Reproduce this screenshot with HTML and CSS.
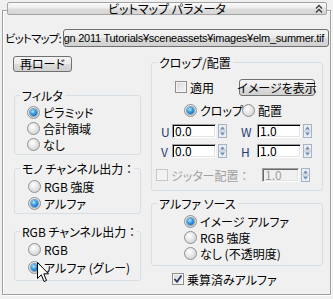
FILE: index.html
```html
<!DOCTYPE html>
<html lang="ja">
<head>
    <meta charset="UTF-8">
    <title>ビットマップ パラメータ</title>
    <link rel="stylesheet" href="styles.css">
</head>
<body>
    <div class="rollout">
        <div class="rollout-title">
            <span>ビットマップ パラメータ</span>
            <svg class="chevron" width="8" height="9" viewBox="0 0 8 9">
                <polyline points="1,4.5 4,1.5 7,4.5" fill="none" stroke="#3c3c3c" stroke-width="1.4"/>
                <polyline points="1,8.5 4,5.5 7,8.5" fill="none" stroke="#3c3c3c" stroke-width="1.4"/>
            </svg>
        </div>

        <div class="bitmap-row">
            <span class="bitmap-label">ビットマップ:</span>
            <div class="btn path-btn"><span>gn 2011 Tutorials¥sceneassets¥images¥elm_summer.tif</span></div>
        </div>

        <div class="columns">
            <!-- 左側 -->
            <div class="col-left">
                <div class="btn reload">再ロード</div>

                <fieldset class="group filter">
                    <legend>フィルタ</legend>
                    <div class="group-body">
                        <div class="opt"><span class="radio on"></span>ピラミッド</div>
                        <div class="opt"><span class="radio"></span>合計領域</div>
                        <div class="opt"><span class="radio"></span>なし</div>
                    </div>
                </fieldset>

                <fieldset class="group mono">
                    <legend>モノ チャンネル出力 ：</legend>
                    <div class="group-body">
                        <div class="opt"><span class="radio"></span>RGB 強度</div>
                        <div class="opt"><span class="radio on"></span>アルファ</div>
                    </div>
                </fieldset>

                <fieldset class="group rgb">
                    <legend>RGB チャンネル出力 ：</legend>
                    <div class="group-body">
                        <div class="opt"><span class="radio"></span>RGB</div>
                        <div class="opt"><span class="radio on"></span>アルファ (グレー)</div>
                    </div>
                </fieldset>
            </div>

            <!-- 右側 -->
            <div class="col-right">
                <fieldset class="group crop">
                    <legend>クロップ/配置</legend>
                    <div class="group-body">
                        <div class="apply-row">
                            <div class="opt"><span class="check"></span>適用</div>
                            <div class="btn show-btn">イメージを表示</div>
                        </div>
                        <div class="mode-row">
                            <div class="opt"><span class="radio on"></span>クロップ</div>
                            <div class="opt"><span class="radio"></span>配置</div>
                        </div>
                        <div class="num-row">
                            <span class="axis">U</span>
                            <span class="field">0.0</span>
                            <svg class="spin" width="9" height="14" viewBox="0 0 9 14"><rect x="0.5" y="0.5" width="8" height="13" fill="#e9eef4" stroke="#a9b4c2"/><line x1="1" y1="7" x2="8" y2="7" stroke="#b8c2ce"/><path d="M4.5 2.5 L7 5.5 L2 5.5 Z" fill="#6d8bb3"/><path d="M2 8.5 L7 8.5 L4.5 11.5 Z" fill="#6d8bb3"/></svg>
                            <span class="axis wide">W</span>
                            <span class="field">1.0</span>
                            <svg class="spin" width="9" height="14" viewBox="0 0 9 14"><rect x="0.5" y="0.5" width="8" height="13" fill="#e9eef4" stroke="#a9b4c2"/><line x1="1" y1="7" x2="8" y2="7" stroke="#b8c2ce"/><path d="M4.5 2.5 L7 5.5 L2 5.5 Z" fill="#6d8bb3"/><path d="M2 8.5 L7 8.5 L4.5 11.5 Z" fill="#6d8bb3"/></svg>
                        </div>
                        <div class="num-row">
                            <span class="axis">V</span>
                            <span class="field">0.0</span>
                            <svg class="spin" width="9" height="14" viewBox="0 0 9 14"><rect x="0.5" y="0.5" width="8" height="13" fill="#e9eef4" stroke="#a9b4c2"/><line x1="1" y1="7" x2="8" y2="7" stroke="#b8c2ce"/><path d="M4.5 2.5 L7 5.5 L2 5.5 Z" fill="#6d8bb3"/><path d="M2 8.5 L7 8.5 L4.5 11.5 Z" fill="#6d8bb3"/></svg>
                            <span class="axis wide">H</span>
                            <span class="field">1.0</span>
                            <svg class="spin" width="9" height="14" viewBox="0 0 9 14"><rect x="0.5" y="0.5" width="8" height="13" fill="#e9eef4" stroke="#a9b4c2"/><line x1="1" y1="7" x2="8" y2="7" stroke="#b8c2ce"/><path d="M4.5 2.5 L7 5.5 L2 5.5 Z" fill="#6d8bb3"/><path d="M2 8.5 L7 8.5 L4.5 11.5 Z" fill="#6d8bb3"/></svg>
                        </div>
                        <div class="jitter-row">
                            <div class="opt disabled"><span class="check off"></span>ジッター配置 ：</div>
                            <span class="field disabled">1.0</span>
                            <svg class="spin" width="9" height="14" viewBox="0 0 9 14"><rect x="0.5" y="0.5" width="8" height="13" fill="#e9eef4" stroke="#a9b4c2"/><line x1="1" y1="7" x2="8" y2="7" stroke="#b8c2ce"/><path d="M4.5 2.5 L7 5.5 L2 5.5 Z" fill="#6d8bb3"/><path d="M2 8.5 L7 8.5 L4.5 11.5 Z" fill="#6d8bb3"/></svg>
                        </div>
                    </div>
                </fieldset>

                <fieldset class="group alpha">
                    <legend>アルファ ソース</legend>
                    <div class="group-body">
                        <div class="opt"><span class="radio on"></span>イメージ アルファ</div>
                        <div class="opt"><span class="radio"></span>RGB 強度</div>
                        <div class="opt"><span class="radio"></span>なし (不透明度)</div>
                    </div>
                </fieldset>

                <div class="opt premult"><span class="check on"><svg width="10" height="10" viewBox="0 0 10 10"><path d="M1.5 5 L4 7.8 L8.5 1.5" fill="none" stroke="#2b3b66" stroke-width="1.8"/></svg></span>乗算済みアルファ</div>
            </div>
        </div>
    </div>

    <!-- マウスカーソル -->
    <svg class="cursor" width="13" height="21" viewBox="0 0 13 21">
        <path d="M0.5 0.5 L0.5 16.5 L4.3 12.8 L7 19.5 L9.5 18.5 L6.8 11.8 L11.5 11.8 Z" fill="#fff" stroke="#000" stroke-width="1" stroke-linejoin="miter"/>
    </svg>
</body>
</html>
```

FILE: styles.css
```css
body {
    margin: 0;
    width: 333px;
    height: 299px;
    overflow: hidden;
    position: relative;
    background-color: #f0f0f0;
    font-family: "Noto Sans CJK JP", sans-serif;
    font-size: 12px;
    font-feature-settings: "palt";
    color: #000;
}
.rollout {
    margin: 10px 2px 0 2px;
    height: 285px;
    border: 1px solid #a0a0a0;
    box-shadow: inset 1px 1px 0 #fff, 1px 1px 0 #fff;
    box-sizing: border-box;
}
.rollout-title {
    margin: -9px 3px 0 4px;
    height: 13px;
    border: 1px solid #a3a3a3;
    border-radius: 2px;
    background: linear-gradient(#fbfbfb, #eeeeee 45%, #dddddd 55%, #d6d6d6);
    box-sizing: border-box;
    display: flex;
    align-items: center;
    justify-content: center;
    line-height: 11px;
    position: relative;
}
.chevron {
    position: absolute;
    right: 3px;
    top: 1px;
}
.bitmap-row {
    margin-top: 14px;
    padding: 0 1px 0 2px;
    display: flex;
    align-items: center;
    height: 18px;
}
.bitmap-label {
    flex: none;
    white-space: nowrap;
    font-size: 11.5px;
    letter-spacing: -0.8px;
    margin-right: 2px;
}
.btn {
    border: 1px solid #707070;
    border-radius: 3px;
    background: linear-gradient(#f4f4f4, #ebebeb 50%, #dddddd 50%, #d0d0d0);
    box-sizing: border-box;
    display: flex;
    align-items: center;
    justify-content: center;
    white-space: nowrap;
}
.path-btn {
    flex: 1;
    min-width: 0;
    height: 18px;
    overflow: hidden;
    justify-content: flex-end;
    padding-right: 4px;
    line-height: 16px;
    font-family: "Liberation Sans", sans-serif;
    font-size: 11px;
    letter-spacing: -0.25px;
}
.columns {
    display: flex;
}
.col-left {
    width: 148px;
    padding-left: 10px;
    box-sizing: border-box;
}
.col-right {
    width: 172px;
}
.reload {
    margin-top: 9px;
    width: 59px;
    height: 16px;
    line-height: 14px;
}
.group {
    margin: 0;
    padding: 0;
    border: 1px solid #d5dfe5;
    border-radius: 3px;
    min-width: 0;
    box-sizing: border-box;
}
.group legend {
    margin-left: 5px;
    padding: 0 2px;
    line-height: 15px;
    white-space: nowrap;
}
.group-body {
    display: flex;
    flex-direction: column;
}
.opt {
    display: flex;
    align-items: center;
    gap: 3px;
    height: 16px;
    white-space: nowrap;
}
.radio {
    width: 13px;
    height: 13px;
    border-radius: 50%;
    box-sizing: border-box;
    border: 1px solid #8d9092;
    background: radial-gradient(circle at 40% 35%, #ffffff, #e6e6e6 45%, #c9c9c9);
    display: flex;
    align-items: center;
    justify-content: center;
    flex: none;
}
.radio.on::after {
    content: "";
    width: 7px;
    height: 7px;
    border-radius: 50%;
    background: radial-gradient(circle at 40% 35%, #b5e8ff, #3098e0 45%, #0d4c90);
    box-shadow: 0 0 0 1px #7b9cba;
}
.check {
    width: 12px;
    height: 12px;
    box-sizing: border-box;
    border: 1px solid #8f8f8f;
    background: linear-gradient(135deg, #d6d6d6, #f7f7f7);
    box-shadow: inset 0 0 0 1px #f4f4f4;
    display: flex;
    align-items: center;
    justify-content: center;
    flex: none;
}
.check.off {
    border-color: #c6c6c6;
    background: #f2f2f2;
}
.disabled {
    color: #a0a0a0;
}
.filter {
    width: 127px;
    margin: 16px 0 0 1px;
}
.filter .group-body {
    padding: 1px 0 2px 12px;
}
.mono {
    width: 127px;
    margin: 6px 0 0 1px;
}
.mono .group-body {
    padding: 2px 0 2px 13px;
    gap: 1px;
}
.rgb {
    width: 127px;
    margin: 10px 0 0 1px;
}
.rgb .group-body {
    padding: 2px 0 5px 13px;
    gap: 2px;
}
.crop {
    margin-top: 8px;
}
.crop .group-body {
    padding: 8px 0 8px 0;
}
.apply-row {
    display: flex;
    align-items: center;
    height: 18px;
    padding-left: 23px;
}
.apply-row .opt {
    width: 64px;
}
.show-btn {
    width: 76px;
    height: 17px;
    line-height: 15px;
}
.mode-row {
    display: flex;
    margin-top: 6px;
    padding-left: 32px;
}
.mode-row .opt {
    width: 58px;
}
.num-row {
    display: flex;
    align-items: center;
    margin-top: 6px;
    padding-left: 9px;
    height: 14px;
}
.axis {
    width: 11px;
    color: #1d3c78;
}
.axis.wide {
    width: 16px;
    margin-left: 14px;
}
.field {
    width: 44px;
    height: 14px;
    box-sizing: border-box;
    border: 1px solid;
    border-color: #a0a0a0 #ffffff #ffffff #a0a0a0;
    box-shadow: inset 1px 1px 0 #000, inset -1px -1px 0 #e3e3e3;
    background-color: #fff;
    padding-left: 2px;
    line-height: 12px;
    font-size: 12px;
}
.field.disabled {
    width: 37px;
    background-color: #f0f0f0;
    box-shadow: inset 1px 1px 0 #696969, inset -1px -1px 0 #e3e3e3;
}
.spin {
    margin-left: 2px;
    flex: none;
}
.jitter-row {
    display: flex;
    align-items: center;
    margin-top: 10px;
    padding-left: 4px;
    height: 14px;
}
.jitter-row .opt {
    width: 106px;
}
.alpha {
    margin-top: 5px;
}
.alpha .group-body {
    padding: 2px 0 4px 32px;
}
.premult {
    margin-top: 6px;
    padding-left: 21px;
    height: 14px;
}
.cursor {
    position: absolute;
    left: 37px;
    top: 262px;
}
```
